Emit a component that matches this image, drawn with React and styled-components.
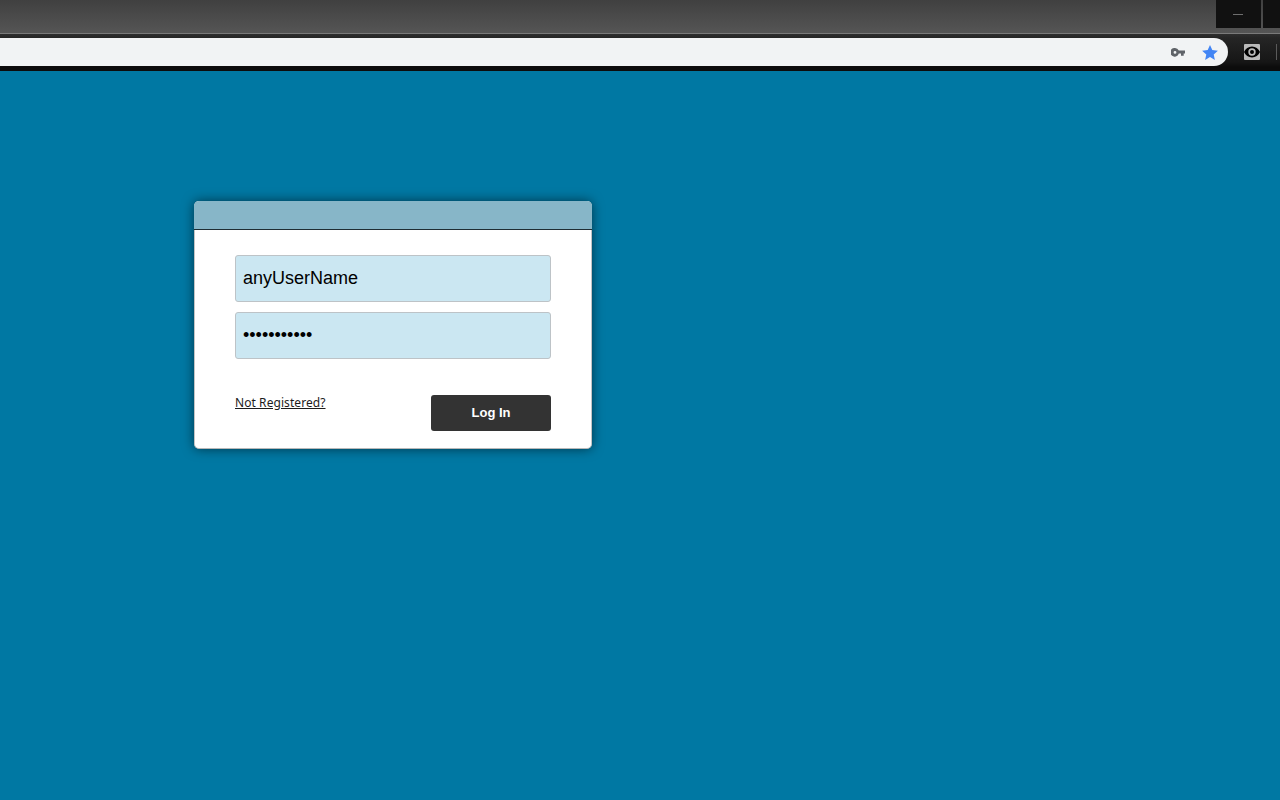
import React from 'react';
import styled, { createGlobalStyle } from 'styled-components';

const GlobalStyle = createGlobalStyle`
  html, body {
    margin: 0;
    padding: 0;
    height: 100%;
    overflow: hidden;
    background: #0078a3;
    font-family: "Liberation Sans", Arial, sans-serif;
  }
`;

const Page = styled.div`
  width: 1280px;
  height: 800px;
  display: flex;
  flex-direction: column;
  background: #0078a3;
`;

const TitleBar = styled.div`
  height: 33px;
  display: flex;
  justify-content: flex-end;
  align-items: flex-start;
  gap: 2px;
  background: linear-gradient(#404040, #555);
  border-bottom: 1px solid #7a7a7a;
`;

const WindowButton = styled.div`
  width: ${props => props.$width}px;
  height: 28px;
  display: flex;
  align-items: center;
  justify-content: center;
  background: #111;
`;

const MinimizeMark = styled.span`
  width: 10px;
  height: 1px;
  margin-right: 1px;
  background: #6e6e6e;
`;

const Toolbar = styled.div`
  height: 33px;
  padding-top: 4px;
  display: flex;
  align-items: flex-start;
  background: linear-gradient(#2e2e2e 0, #252525 4px, #161616 28px, #0c0c0c 33px);
`;

const Omnibox = styled.div`
  width: 1228px;
  height: 28px;
  box-sizing: border-box;
  padding-right: 10px;
  display: flex;
  align-items: center;
  justify-content: flex-end;
  gap: 17px;
  background: #f1f3f4;
  border-radius: 0 14px 14px 0;
`;

const ExtensionArea = styled.div`
  flex: 1;
  height: 28px;
  padding-left: 16px;
  display: flex;
  align-items: center;
  gap: 16px;
`;

const EyeBadge = styled.div`
  width: 16px;
  height: 16px;
  display: flex;
  align-items: center;
  justify-content: center;
  background: #b9b9b9;
  border-radius: 1px;
`;

const Divider = styled.span`
  width: 1px;
  height: 16px;
  background: #5a5a5a;
`;

const Content = styled.main`
  flex: 1;
  padding: 130px 0 0 194px;
`;

const Card = styled.section`
  width: 398px;
  height: 248px;
  box-sizing: border-box;
  display: flex;
  flex-direction: column;
  background: #fff;
  border-radius: 5px;
  border-right: 1px solid #c4c4c4;
  border-bottom: 1px solid #b8b8b8;
  border-left: 1px solid #c4c4c4;
  box-shadow: 0 0 12px rgba(0, 0, 0, 0.55);
`;

const CardHeader = styled.header`
  height: 28px;
  margin: 0 -1px;
  flex: none;
  background: #87b6c8;
  border-bottom: 1px solid #1f2d33;
  border-radius: 5px 5px 0 0;
`;

const Form = styled.form`
  flex: 1;
  padding: 25px 40px 0;
  display: flex;
  flex-direction: column;
  gap: 10px;
`;

const Field = styled.input`
  width: 316px;
  height: 47px;
  box-sizing: border-box;
  padding: 0 7px;
  font-family: "Liberation Sans", Arial, sans-serif;
  font-size: 18px;
  color: #000;
  background: #cbe7f2;
  border: 1px solid #bdc3c7;
  border-radius: 3px;
  outline: none;
`;

const FormFooter = styled.div`
  margin-top: 26px;
  display: flex;
  justify-content: space-between;
  align-items: flex-start;
`;

const RegisterLink = styled.a`
  margin-top: -1px;
  font-family: "Noto Sans", "Open Sans", sans-serif;
  font-size: 12px;
  letter-spacing: 0.07px;
  line-height: 17px;
  color: #1c1c1c;
  text-decoration: underline;
`;

const LoginButton = styled.button`
  width: 120px;
  height: 36px;
  padding: 0 0 1px;
  font-family: "Liberation Sans", Arial, sans-serif;
  font-size: 13px;
  font-weight: 700;
  color: #fff;
  background: #333;
  border: none;
  border-radius: 3px;
`;

const KeyIcon = () => (
  <svg width="14" height="9" viewBox="0 0 14 9">
    <path
      fill="#5f6368"
      fillRule="evenodd"
      d="M4 0a4.300 4.300 0 0 1 3.800 2.600h6.200v3h-1.300v2.200h-2.700V5.600H7.800A4.300 4.300 0 1 1 4 0zM4 3a1.400 1.400 0 1 0 0 2.800a1.400 1.400 0 0 0 0-2.800z"
    />
  </svg>
);

const StarIcon = () => (
  <svg width="16" height="15" viewBox="0 0 16 15">
    <path fill="#4285f4" d="M8 0l2.300 5.100 5.600.6-4.200 3.700 1.200 5.500L8 12.100 3.100 14.900l1.200-5.500L.1 5.700l5.600-.6z" />
  </svg>
);

const EyeIcon = () => (
  <svg width="16" height="12" viewBox="0 0 16 12">
    <path
      fill="#000"
      fillRule="evenodd"
      d="M8 .5c3.600 0 6.500 2.200 8 5.500-1.500 3.300-4.400 5.500-8 5.500S1.500 9.300 0 6C1.500 2.700 4.400.5 8 .5zM8 2.300a3.700 3.700 0 1 0 0 7.400a3.700 3.700 0 0 0 0-7.400zM8 4a2 2 0 1 1 0 4a2 2 0 0 1 0-4z"
    />
  </svg>
);

export default function App() {
  return (
    <Page>
      <GlobalStyle />
      <TitleBar>
        <WindowButton $width={45}><MinimizeMark /></WindowButton>
        <WindowButton $width={17} />
      </TitleBar>
      <Toolbar>
        <Omnibox>
          <KeyIcon />
          <StarIcon />
        </Omnibox>
        <ExtensionArea>
          <EyeBadge><EyeIcon /></EyeBadge>
          <Divider />
        </ExtensionArea>
      </Toolbar>
      <Content>
        <Card>
          <CardHeader />
          <Form onSubmit={e => e.preventDefault()}>
            <Field type="text" value="anyUserName" readOnly />
            <Field type="password" value="12345678901" readOnly />
            <FormFooter>
              <RegisterLink href="#">Not Registered?</RegisterLink>
              <LoginButton type="submit">Log In</LoginButton>
            </FormFooter>
          </Form>
        </Card>
      </Content>
    </Page>
  );
}
